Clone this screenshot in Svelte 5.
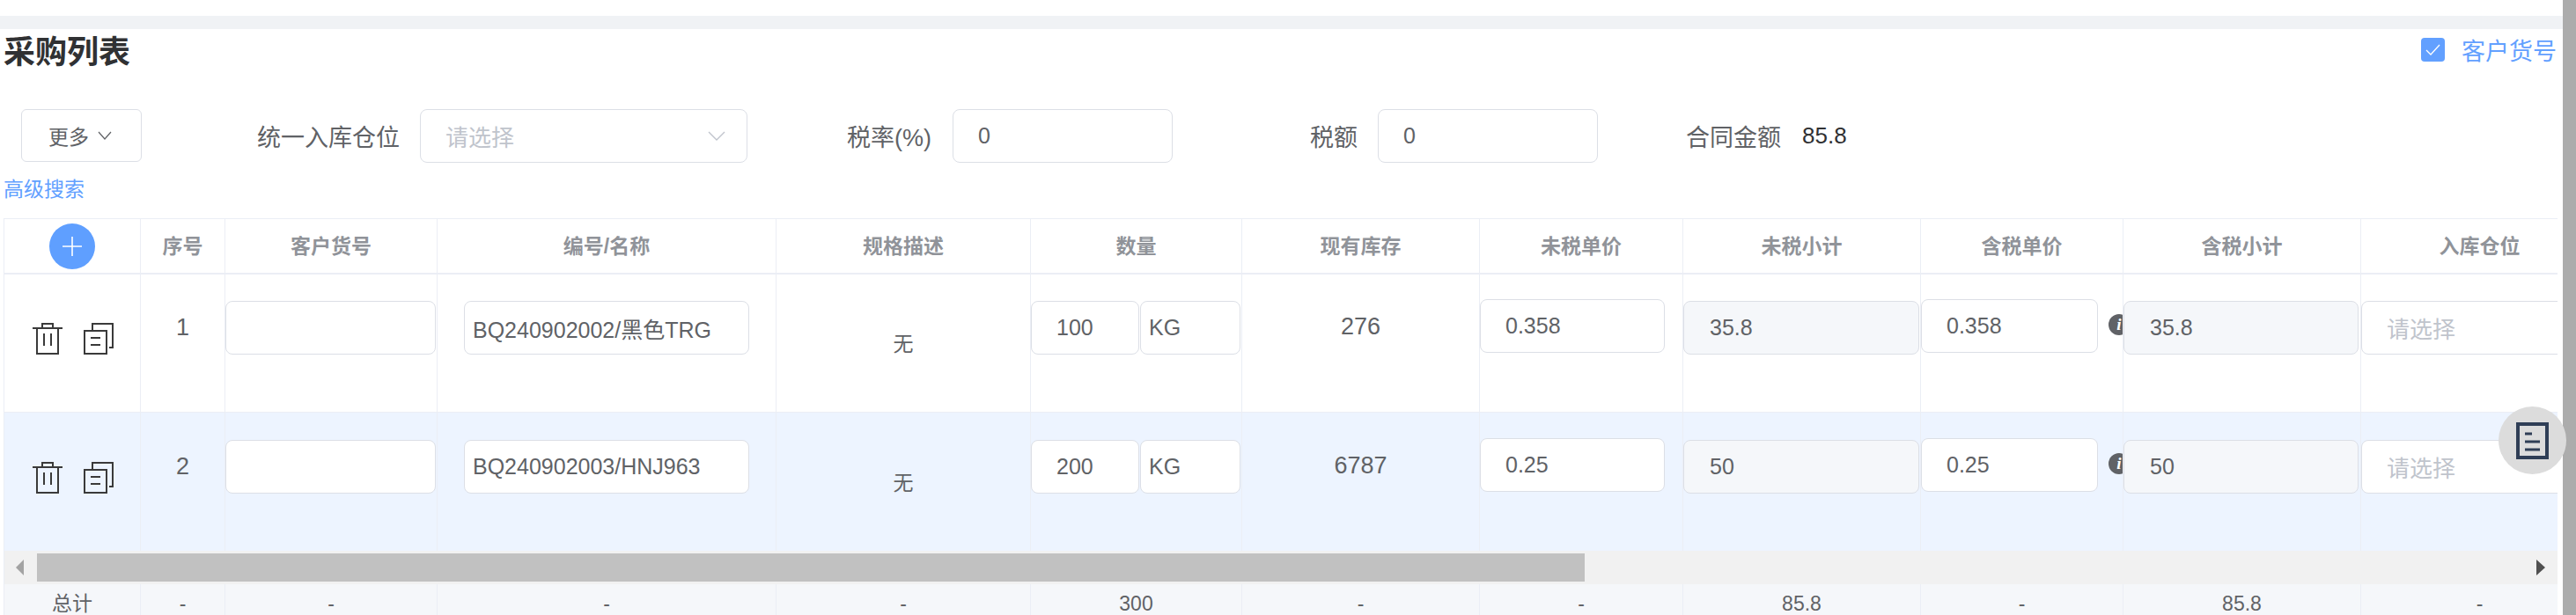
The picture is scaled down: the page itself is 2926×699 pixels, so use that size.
<script>
  const heads = ["", "序号", "客户货号", "编号/名称", "规格描述", "数量", "现有库存", "未税单价", "未税小计", "含税单价", "含税小计", "入库仓位"];
  const rows = [
    { no: 1, name: "BQ240902002/黑色TRG", qty: "100", stock: "276", price: "0.358", sub: "35.8" },
    { no: 2, name: "BQ240902003/HNJ963", qty: "200", stock: "6787", price: "0.25", sub: "50" }
  ];
  const totals = ["总计", "-", "-", "-", "-", "300", "-", "-", "85.8", "-", "85.8", "-"];
</script>

<div class="page">
  <main class="main">
    <div class="band"></div>
    <div class="panel">
      <div class="title-bar">
        <h2 class="title">采购列表</h2>
        <label class="check">
          <span class="check-box">
            <svg width="17" height="13" viewBox="0 0 17 13"><path d="M1 7l5 5L16 1" fill="none" stroke="#fff" stroke-width="1.3" /></svg>
          </span>
          客户货号
        </label>
      </div>

      <div class="filters">
        <button class="more">
          更多
          <svg width="16" height="10" viewBox="0 0 16 10"><path d="M1 1l7 8 7-8" fill="none" stroke="#606266" stroke-width="1.2" /></svg>
        </button>
        <span class="lbl lbl-store">统一入库仓位</span>
        <div class="inp select">
          <span class="ph">请选择</span>
          <svg width="20" height="11" viewBox="0 0 20 11"><path d="M1 1l9 9 9-9" fill="none" stroke="#c0c4cc" stroke-width="1.4" /></svg>
        </div>
        <span class="lbl lbl-rate">税率(%)</span>
        <div class="inp box-rate">0</div>
        <span class="lbl lbl-tax">税额</span>
        <div class="inp box-tax">0</div>
        <span class="lbl lbl-total">合同金额</span>
        <span class="amount">85.8</span>
      </div>

      <a class="adv" href="#top">高级搜索</a>

      <div class="table">
        <div class="grid head">
          {#each heads as h, i}
            <div class="cell">
              {#if i === 0}
                <span class="add">
                  <svg width="22" height="22" viewBox="0 0 22 22"><path d="M11 0v22M0 11h22" stroke="#fff" stroke-width="1.6" /></svg>
                </span>
              {:else}
                <span>{h}</span>
              {/if}
            </div>
          {/each}
        </div>

        {#each rows as r, i}
          <div class="grid row" class:first={i === 0} class:hl={i === 1}>
            <div class="cell ops">
              <svg width="34" height="36" viewBox="0 0 34 36" fill="none" stroke="#3a3a3a" stroke-width="2">
                <path d="M0 6h34M11 6V1h12v5M5 6v29h24V6M13 12v14M21 12v14" />
              </svg>
              <svg width="34" height="36" viewBox="0 0 34 36" fill="none" stroke="#3a3a3a" stroke-width="2">
                <path d="M1 9h25v26H1zM10 8V1h23v27h-4M8 17h11M8 25h11" />
              </svg>
            </div>
            <div class="cell txt"><span class="no">{r.no}</span></div>
            <div class="cell pad1"><div class="inp"></div></div>
            <div class="cell pad-name"><div class="inp name">{r.name}</div></div>
            <div class="cell txt"><span class="spec">无</span></div>
            <div class="cell pad1 qty">
              <div class="inp q">{r.qty}</div>
              <div class="inp unit">KG</div>
            </div>
            <div class="cell txt"><span class="stock">{r.stock}</span></div>
            <div class="cell pad1 up"><div class="inp price w210">{r.price}</div></div>
            <div class="cell pad1"><div class="inp off">{r.sub}</div></div>
            <div class="cell pad1 up tax-price">
              <div class="inp price w201">{r.price}</div>
              <span class="info">i</span>
            </div>
            <div class="cell pad1"><div class="inp off w267">{r.sub}</div></div>
            <div class="cell pad1"><div class="inp"><span class="ph">请选择</span></div></div>
          </div>
        {/each}

        <div class="hbar">
          <span class="arrow left"></span>
          <span class="thumb"></span>
          <span class="arrow right"></span>
        </div>

        <div class="grid foot">
          {#each totals as t}
            <div class="cell">{t}</div>
          {/each}
        </div>
      </div>
    </div>
  </main>
  <div class="vbar"></div>

  <button class="float">
    <svg width="37" height="42" viewBox="0 0 37 42" fill="none" stroke="#2f3e56">
      <rect x="2" y="2" width="33" height="38" stroke-width="4" />
      <path d="M10 13h8M10 22h17M10 31h17" stroke-width="3" />
    </svg>
  </button>
</div>

<style>
  :global(body) {
    margin: 0;
    overflow: hidden;
    background: #fff;
  }
  .page {
    position: relative;
    display: flex;
    width: 2926px;
    height: 699px;
    overflow: hidden;
    font-family: "Liberation Sans", "Noto Sans CJK SC", sans-serif;
    font-size: 25px;
    color: #606266;
  }
  .main {
    flex: 1;
    min-width: 0;
    padding-top: 18px;
  }
  .vbar {
    width: 15px;
    background: #acacac;
  }
  .band {
    height: 15px;
    background: #f0f2f5;
  }
  .panel {
    padding-left: 4px;
  }
  .title-bar {
    display: flex;
    justify-content: space-between;
    height: 91px;
    padding-right: 7px;
  }
  .title {
    margin: 7px 0 0;
    font-size: 36px;
    line-height: 40px;
    font-weight: 700;
    color: #303133;
  }
  .check {
    display: flex;
    align-items: center;
    gap: 19px;
    height: 27px;
    margin-top: 10px;
    font-size: 27px;
    color: #62a0ff;
  }
  .check-box {
    display: flex;
    align-items: center;
    justify-content: center;
    width: 27px;
    height: 27px;
    border-radius: 4px;
    background: #62a0ff;
  }
  .filters {
    display: flex;
    align-items: center;
    height: 60px;
    padding-left: 20px;
  }
  .more {
    display: flex;
    align-items: center;
    gap: 10px;
    box-sizing: border-box;
    width: 137px;
    height: 60px;
    padding: 0 0 0 30px;
    border: 1px solid #dcdfe6;
    border-radius: 6px;
    background: #fff;
    font: inherit;
    font-size: 23px;
    color: #606266;
  }
  .lbl {
    font-size: 27px;
    white-space: nowrap;
  }
  .lbl-store {
    margin: 0 23px 0 131px;
  }
  .lbl-rate {
    margin: 0 24px 0 113px;
  }
  .lbl-tax {
    margin: 0 23px 0 156px;
  }
  .lbl-total {
    margin: 0 24px 0 100px;
  }
  .amount {
    font-size: 26px;
    color: #303133;
  }
  .inp {
    display: flex;
    align-items: center;
    box-sizing: border-box;
    width: 100%;
    height: 61px;
    padding-left: 28px;
    border: 1px solid #dcdfe6;
    border-radius: 8px;
    background: #fff;
    white-space: nowrap;
  }
  .ph {
    font-size: 26px;
    color: #c0c4cc;
  }
  .select {
    justify-content: space-between;
    width: 372px;
    padding-right: 24px;
  }
  .box-rate,
  .box-tax {
    width: 250px;
  }
  .adv {
    display: block;
    margin-top: 19px;
    height: 45px;
    font-size: 23px;
    line-height: 24px;
    color: #62a0ff;
    text-decoration: none;
  }
  .table {
    width: 2900px;
    overflow: hidden;
    border-top: 1px solid #ebeef5;
    border-left: 1px solid #ebeef5;
  }
  .grid {
    display: grid;
    grid-template-columns: 155px 96px 241px 385px 289px 240px 270px 231px 270px 230px 270px 270px;
  }
  .cell {
    box-sizing: border-box;
    min-width: 0;
    border-right: 1px solid #ebeef5;
    text-align: center;
  }
  .head {
    height: 63px;
    border-bottom: 2px solid #ebeef5;
    box-sizing: border-box;
    font-size: 23px;
    font-weight: 700;
    line-height: 62px;
    color: #909399;
  }
  .add {
    display: flex;
    align-items: center;
    justify-content: center;
    width: 52px;
    height: 52px;
    margin: 5px auto 0 51px;
    border-radius: 50%;
    background: #5f9fff;
  }
  .row {
    box-sizing: border-box;
    height: 157px;
    padding-top: 31px;
  }
  .row.first {
    padding-top: 30px;
    border-bottom: 1px solid #ebeef5;
  }
  .row .cell {
    margin-top: -31px;
    padding-top: 31px;
  }
  .row.first .cell {
    margin-top: -30px;
    padding-top: 30px;
  }
  .hl {
    background: #edf4ff;
  }
  .ops {
    display: flex;
    gap: 24px;
    padding-left: 32px;
  }
  .ops svg {
    margin-top: 25px;
    flex: none;
  }
  .txt span {
    display: block;
    line-height: 40px;
  }
  .no {
    margin-top: 10px;
    font-size: 27px;
  }
  .spec {
    margin-top: 29px;
    font-size: 23px;
  }
  .stock {
    margin-top: 9px;
    font-size: 27px;
  }
  .pad1 {
    padding-right: 1px;
  }
  .pad-name {
    padding-left: 30px;
    padding-right: 30px;
  }
  .name {
    padding-left: 9px;
  }
  .qty {
    display: flex;
    gap: 1px;
  }
  .q {
    width: 123px;
    flex: none;
  }
  .unit {
    width: 114px;
    flex: none;
    padding-left: 9px;
  }
  .up .price {
    margin-top: -2px;
  }
  .w210 {
    width: 210px;
  }
  .w201 {
    width: 201px;
    flex: none;
  }
  .w267 {
    width: 267px;
  }
  .off {
    background: #f5f7fa;
    padding-left: 29px;
  }
  .tax-price {
    display: flex;
    overflow: hidden;
  }
  .info {
    flex: none;
    width: 24px;
    height: 24px;
    margin: 15px 0 0 12px;
    border-radius: 50%;
    background: #606266;
    color: #fff;
    font: italic 700 19px/24px "Liberation Serif", serif;
  }
  .hbar {
    display: flex;
    align-items: center;
    position: relative;
    height: 38px;
    padding-left: 37px;
    background: #f1f1f1;
  }
  .thumb {
    width: 1758px;
    height: 32px;
    background: #c1c1c1;
  }
  .arrow {
    position: absolute;
    top: 10px;
    width: 0;
    height: 0;
    border-top: 9px solid transparent;
    border-bottom: 9px solid transparent;
  }
  .left {
    left: 13px;
    border-right: 9px solid #a3a3a3;
  }
  .right {
    left: 2876px;
    border-left: 10px solid #505050;
  }
  .foot {
    height: 35px;
    background: #f5f7fa;
    font-size: 23px;
    line-height: 26px;
  }
  .foot .cell {
    padding-top: 9px;
  }
  .float {
    position: absolute;
    left: 2838px;
    top: 462px;
    display: flex;
    align-items: center;
    justify-content: center;
    width: 77px;
    height: 77px;
    padding: 0;
    border: 0;
    border-radius: 50%;
    background: #dcdcdc;
  }
</style>
